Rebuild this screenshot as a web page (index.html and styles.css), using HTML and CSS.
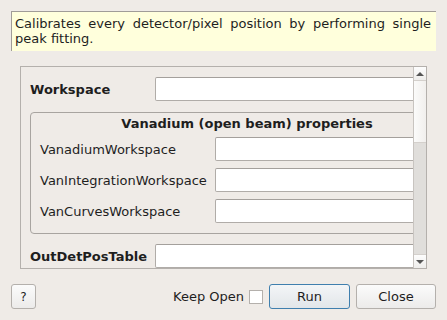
FILE: index.html
```html
<!DOCTYPE html>
<html lang="en">
<head>
  <meta charset="UTF-8">
  <title>Algorithm dialog</title>
  <link rel="stylesheet" href="styles.css">
</head>
<body>
  <div class="dialog">
    <div class="desc">Calibrates every detector/pixel position by performing single peak fitting.</div>

    <div class="scroll">
      <div class="viewport">
        <div class="content">
          <div class="row">
            <label class="prop bold">Workspace</label>
            <span class="field"></span>
          </div>

          <div class="group">
            <div class="group-title">Vanadium (open beam) properties</div>
            <div class="grow">
              <label class="gprop">VanadiumWorkspace</label>
              <span class="field"></span>
            </div>
            <div class="grow">
              <label class="gprop">VanIntegrationWorkspace</label>
              <span class="field"></span>
            </div>
            <div class="grow">
              <label class="gprop">VanCurvesWorkspace</label>
              <span class="field"></span>
            </div>
          </div>

          <div class="row">
            <label class="prop bold">OutDetPosTable</label>
            <span class="field"></span>
          </div>
        </div>
      </div>
      <div class="scrollbar">
        <div class="sb-btn"><span class="arrow-up"></span></div>
        <div class="sb-handle"></div>
        <div class="sb-track"></div>
        <div class="sb-btn sb-down"><span class="arrow-down"></span></div>
      </div>
    </div>

    <div class="buttons">
      <button class="btn help">?</button>
      <span class="spacer"></span>
      <span class="keep">Keep Open</span>
      <span class="check"></span>
      <button class="btn run">Run</button>
      <button class="btn close">Close</button>
    </div>
  </div>
</body>
</html>
```

FILE: styles.css
```css
*{
  margin: 0;
  padding: 0;
  box-sizing: border-box;
}

body{
  background: #efebe7;
  font-family: "DejaVu Sans", sans-serif;
  font-size: 13px;
  color: #1e1e1e;
}

.dialog{
  width: 447px;
  height: 320px;
  padding: 11px 11px 0 11px;
  display: flex;
  flex-direction: column;
}

.desc{
  width: 425px;
  height: 40px;
  background: #ffffdc;
  border-top: 1px solid #a09c98;
  border-left: 1px solid #a09c98;
  padding: 4px 5px 0 3px;
  line-height: 15px;
  text-align: justify;
}

.scroll{
  margin: 15px 0 0 9px;
  width: 407px;
  height: 203px;
  border: 1px solid #b4b0ac;
  display: flex;
}

.viewport{
  flex: 1;
  overflow: hidden;
}

.content{
  width: 460px;
  padding: 10px 0 0 9px;
}

.row{
  display: flex;
  align-items: center;
  height: 24px;
}

.prop{
  width: 125px;
}

.bold{
  font-weight: bold;
}

.field{
  display: block;
  flex: 1;
  height: 24px;
  background: #fff;
  border: 1px solid #b0aca8;
  border-top-color: #a4a09c;
  border-radius: 2px;
}

.group{
  margin: 11px 0 10px 0;
  width: 434px;
  height: 122px;
  border: 1px solid #a8a4a0;
  border-radius: 4px;
  padding: 0 0 0 9px;
}

.group-title{
  font-weight: bold;
  text-align: center;
  height: 24px;
  line-height: 21px;
  padding-right: 9px;
}

.grow{
  display: flex;
  align-items: center;
  height: 24px;
  margin-bottom: 7px;
}

.gprop{
  width: 175px;
}

.scrollbar{
  width: 13px;
  display: flex;
  flex-direction: column;
  border-left: 1px solid #c8c4c0;
}

.sb-btn{
  height: 14px;
  background: linear-gradient(#fdfdfd, #eeedeb);
  border-bottom: 1px solid #d4d0cc;
  display: flex;
  align-items: center;
  justify-content: center;
}

.sb-down{
  border-bottom: none;
  border-top: 1px solid #d4d0cc;
}

.arrow-up{
  width: 0;
  height: 0;
  border-left: 4px solid transparent;
  border-right: 4px solid transparent;
  border-bottom: 4px solid #555;
}

.arrow-down{
  width: 0;
  height: 0;
  border-left: 4px solid transparent;
  border-right: 4px solid transparent;
  border-top: 4px solid #555;
}

.sb-handle{
  height: 62px;
  background: linear-gradient(to right, #fbfbfa, #f1efed);
  border-bottom: 1px solid #d4d0cc;
}

.sb-track{
  flex: 1;
  background: #e0dedb;
}

.buttons{
  margin-top: 15px;
  display: flex;
  align-items: center;
  height: 25px;
}

.btn{
  font-family: "DejaVu Sans", sans-serif;
  font-size: 13px;
  color: #1e1e1e;
  height: 25px;
  border: 1px solid #b4b0ac;
  border-radius: 3px;
  background: linear-gradient(#fbfbfb, #ecebea);
}

.help{
  width: 25px;
  font-size: 12px;
}

.spacer{
  flex: 1;
}

.keep{
  margin-right: 5px;
}

.check{
  width: 14px;
  height: 14px;
  background: #fff;
  border: 1px solid #b4b0ac;
  margin-right: 6px;
}

.run{
  width: 81px;
  border-color: #3f7fae;
  background: linear-gradient(#f3f5f7, #e2e6e9);
  margin-right: 6px;
}

.close{
  width: 80px;
}
```
